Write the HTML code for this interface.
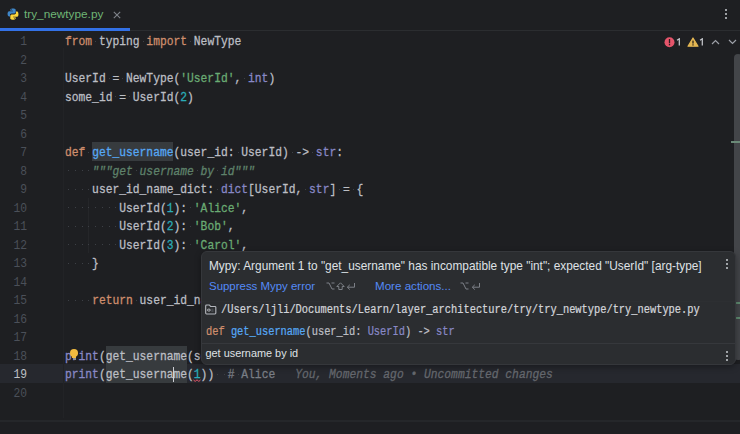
<!DOCTYPE html>
<html><head><meta charset="utf-8">
<style>
*{margin:0;padding:0;box-sizing:border-box}
html,body{width:740px;height:434px;overflow:hidden;background:#1e1f22}
body{position:relative;font-family:"Liberation Sans",sans-serif}
.a{position:absolute}
.ln{position:absolute;left:0;width:27px;text-align:right;font-family:"Liberation Mono",monospace;font-size:11.30px;color:#4b5059;line-height:18.50px;transform:scaleY(1.140);transform-origin:0 12.25px}
.cl{position:absolute;left:65.00px;white-space:pre;font-family:"Liberation Mono",monospace;font-size:11.30px;color:#bcbec4;line-height:18.50px;transform:scaleY(1.140);transform-origin:0 12.25px;-webkit-text-stroke:0.25px currentColor}
.k{color:#cf8e6d}.s{color:#6aab73}.n{color:#2aacb8}.f{color:#56a8f5}.b{color:#8888c6}
.d{color:#5f826b;font-style:italic}.c{color:#7a7e85}
.dot{position:absolute;width:1px;height:1px;background:#3d4046}
.hl{position:absolute;background:#373b3e}
.pm{position:absolute;white-space:pre;font-family:"Liberation Mono",monospace;font-size:10.37px;color:#bcbec4;transform:scaleY(1.2);transform-origin:0 78%;-webkit-text-stroke:0.2px currentColor}
.ps{position:absolute;white-space:pre;font-family:"Liberation Sans",sans-serif;color:#dfe1e5}
.vd{position:absolute;width:2px;height:2px;border-radius:1px;background:#c9ccd1}
</style></head><body>

<div class="a" style="left:0;top:30px;width:740px;height:1px;background:#2b2d30"></div>
<div class="a" style="left:0;top:28px;width:130px;height:3px;background:#3371e6"></div>
<svg class="a" style="left:7px;top:8px" width="12" height="12" viewBox="0 0 16 16">
<path d="M7.9 0.5c-3.6 0-3.4 1.6-3.4 1.6v1.7h3.5v0.5H3.1S0.7 4 0.7 7.7s2.1 3.5 2.1 3.5h1.2V9.5s-0.1-2.1 2.1-2.1h3.5s2 0 2-2V2.4S11.9 0.5 7.9 0.5zM6 1.6c0.35 0 0.63 0.28 0.63 0.63S6.35 2.86 6 2.86 5.37 2.58 5.37 2.23 5.65 1.6 6 1.6z" fill="#3f86c8"/>
<path d="M8.1 15.5c3.6 0 3.4-1.6 3.4-1.6v-1.7H8v-0.5h4.9s2.4 0.3 2.4-3.4-2.1-3.5-2.1-3.5H12v1.7s0.1 2.1-2.1 2.1H6.4s-2 0-2 2v3.3S4.1 15.5 8.1 15.5zM10 14.4c-0.35 0-0.63-0.28-0.63-0.63s0.28-0.63 0.63-0.63 0.63 0.28 0.63 0.63-0.28 0.63-0.63 0.63z" fill="#fcd63c"/>
</svg>
<div class="a" style="left:24px;top:7px;font-size:11.8px;line-height:14px;color:#6fb575;white-space:pre">try_newtype.py</div>
<svg class="a" style="left:113px;top:10.5px" width="8" height="8" viewBox="0 0 8 8"><path d="M0.8 0.8L7.2 7.2M7.2 0.8L0.8 7.2" stroke="#7f838a" stroke-width="1.1"/></svg>
<div class="vd" style="left:725px;top:9.0px"></div>
<div class="vd" style="left:725px;top:13.0px"></div>
<div class="vd" style="left:725px;top:17.0px"></div>
<div class="a" style="left:0;top:364.00px;width:740px;height:18.50px;background:#26282e"></div>
<div class="a" style="left:63px;top:48px;width:1px;height:370px;background:#222326"></div>
<div class="a" style="left:0;top:420px;width:740px;height:2px;background:#25272a"></div>
<div class="hl" style="left:92.1px;top:142.0px;width:81.4px;height:18.5px"></div>
<div class="hl" style="left:105.7px;top:345.5px;width:81.4px;height:37.0px"></div>
<div class="a" style="left:88.2px;top:197.5px;width:1px;height:55.5px;background:#252629"></div>
<div class="ln" style="top:33.20px;color:#4b5059">1</div>
<div class="ln" style="top:51.70px;color:#4b5059">2</div>
<div class="ln" style="top:70.20px;color:#4b5059">3</div>
<div class="ln" style="top:88.70px;color:#4b5059">4</div>
<div class="ln" style="top:107.20px;color:#4b5059">5</div>
<div class="ln" style="top:125.70px;color:#4b5059">6</div>
<div class="ln" style="top:144.20px;color:#4b5059">7</div>
<div class="ln" style="top:162.70px;color:#4b5059">8</div>
<div class="ln" style="top:181.20px;color:#4b5059">9</div>
<div class="ln" style="top:199.70px;color:#4b5059">10</div>
<div class="ln" style="top:218.20px;color:#4b5059">11</div>
<div class="ln" style="top:236.70px;color:#4b5059">12</div>
<div class="ln" style="top:255.20px;color:#4b5059">13</div>
<div class="ln" style="top:273.70px;color:#4b5059">14</div>
<div class="ln" style="top:292.20px;color:#4b5059">15</div>
<div class="ln" style="top:310.70px;color:#4b5059">16</div>
<div class="ln" style="top:329.20px;color:#4b5059">17</div>
<div class="ln" style="top:347.70px;color:#4b5059">18</div>
<div class="ln" style="top:366.20px;color:#bfc1c7">19</div>
<div class="ln" style="top:384.70px;color:#4b5059">20</div>
<div class="dot" style="left:95.0px;top:40.6px"></div>
<div class="dot" style="left:142.5px;top:40.6px"></div>
<div class="dot" style="left:190.0px;top:40.6px"></div>
<div class="dot" style="left:108.6px;top:77.6px"></div>
<div class="dot" style="left:122.2px;top:77.6px"></div>
<div class="dot" style="left:244.3px;top:77.6px"></div>
<div class="dot" style="left:115.4px;top:96.1px"></div>
<div class="dot" style="left:129.0px;top:96.1px"></div>
<div class="dot" style="left:88.2px;top:151.6px"></div>
<div class="dot" style="left:237.5px;top:151.6px"></div>
<div class="dot" style="left:291.8px;top:151.6px"></div>
<div class="dot" style="left:312.2px;top:151.6px"></div>
<div class="dot" style="left:67.9px;top:170.1px"></div>
<div class="dot" style="left:74.7px;top:170.1px"></div>
<div class="dot" style="left:81.5px;top:170.1px"></div>
<div class="dot" style="left:88.2px;top:170.1px"></div>
<div class="dot" style="left:135.7px;top:170.1px"></div>
<div class="dot" style="left:196.8px;top:170.1px"></div>
<div class="dot" style="left:217.2px;top:170.1px"></div>
<div class="dot" style="left:67.9px;top:188.6px"></div>
<div class="dot" style="left:74.7px;top:188.6px"></div>
<div class="dot" style="left:81.5px;top:188.6px"></div>
<div class="dot" style="left:88.2px;top:188.6px"></div>
<div class="dot" style="left:217.2px;top:188.6px"></div>
<div class="dot" style="left:305.4px;top:188.6px"></div>
<div class="dot" style="left:339.3px;top:188.6px"></div>
<div class="dot" style="left:352.9px;top:188.6px"></div>
<div class="dot" style="left:67.9px;top:207.1px"></div>
<div class="dot" style="left:74.7px;top:207.1px"></div>
<div class="dot" style="left:81.5px;top:207.1px"></div>
<div class="dot" style="left:88.2px;top:207.1px"></div>
<div class="dot" style="left:95.0px;top:207.1px"></div>
<div class="dot" style="left:101.8px;top:207.1px"></div>
<div class="dot" style="left:108.6px;top:207.1px"></div>
<div class="dot" style="left:115.4px;top:207.1px"></div>
<div class="dot" style="left:190.0px;top:207.1px"></div>
<div class="dot" style="left:67.9px;top:225.6px"></div>
<div class="dot" style="left:74.7px;top:225.6px"></div>
<div class="dot" style="left:81.5px;top:225.6px"></div>
<div class="dot" style="left:88.2px;top:225.6px"></div>
<div class="dot" style="left:95.0px;top:225.6px"></div>
<div class="dot" style="left:101.8px;top:225.6px"></div>
<div class="dot" style="left:108.6px;top:225.6px"></div>
<div class="dot" style="left:115.4px;top:225.6px"></div>
<div class="dot" style="left:190.0px;top:225.6px"></div>
<div class="dot" style="left:67.9px;top:244.1px"></div>
<div class="dot" style="left:74.7px;top:244.1px"></div>
<div class="dot" style="left:81.5px;top:244.1px"></div>
<div class="dot" style="left:88.2px;top:244.1px"></div>
<div class="dot" style="left:95.0px;top:244.1px"></div>
<div class="dot" style="left:101.8px;top:244.1px"></div>
<div class="dot" style="left:108.6px;top:244.1px"></div>
<div class="dot" style="left:115.4px;top:244.1px"></div>
<div class="dot" style="left:190.0px;top:244.1px"></div>
<div class="dot" style="left:67.9px;top:262.6px"></div>
<div class="dot" style="left:74.7px;top:262.6px"></div>
<div class="dot" style="left:81.5px;top:262.6px"></div>
<div class="dot" style="left:88.2px;top:262.6px"></div>
<div class="dot" style="left:67.9px;top:299.6px"></div>
<div class="dot" style="left:74.7px;top:299.6px"></div>
<div class="dot" style="left:81.5px;top:299.6px"></div>
<div class="dot" style="left:88.2px;top:299.6px"></div>
<div class="dot" style="left:135.7px;top:299.6px"></div>
<div class="dot" style="left:217.2px;top:373.6px"></div>
<div class="dot" style="left:223.9px;top:373.6px"></div>
<div class="dot" style="left:237.5px;top:373.6px"></div>
<div class="cl" style="top:33.20px"><span class="k">from</span> typing <span class="k">import</span> NewType</div>
<div class="cl" style="top:70.20px">UserId = NewType(<span class="s">'UserId'</span>, <span class="b">int</span>)</div>
<div class="cl" style="top:88.70px">some_id = UserId(<span class="n">2</span>)</div>
<div class="cl" style="top:144.20px"><span class="k">def</span> <span class="f">get_username</span>(user_id: UserId) -&gt; <span class="b">str</span>:</div>
<div class="cl" style="top:162.70px">    <span class="d">"""get username by id"""</span></div>
<div class="cl" style="top:181.20px">    user_id_name_dict: <span class="b">dict</span>[UserId, <span class="b">str</span>] = {</div>
<div class="cl" style="top:199.70px">        UserId(<span class="n">1</span>): <span class="s">'Alice'</span>,</div>
<div class="cl" style="top:218.20px">        UserId(<span class="n">2</span>): <span class="s">'Bob'</span>,</div>
<div class="cl" style="top:236.70px">        UserId(<span class="n">3</span>): <span class="s">'Carol'</span>,</div>
<div class="cl" style="top:255.20px">    }</div>
<div class="cl" style="top:292.20px">    <span class="k">return</span> user_id_name_dict[user_id]</div>
<div class="cl" style="top:347.70px"><span class="b">print</span>(get_username(some_id))</div>
<div class="cl" style="top:366.20px"><span class="b">print</span>(get_username(<span class="n">1</span>))  <span class="c"># Alice</span></div>
<div class="cl" style="left:295.2px;top:366.20px;color:#64676d;font-style:italic">You, Moments ago • Uncommitted changes</div>
<div class="a" style="left:173.2px;top:366.5px;width:1.2px;height:15px;background:#ced0d6"></div>
<svg class="a" style="left:193.4px;top:378.5px" width="8" height="3" viewBox="0 0 8 3"><path d="M0.5 1L2.2 2.4L4 0.8L5.8 2.4L7.5 1" stroke="#e8566a" stroke-width="1" fill="none"/></svg>
<div class="a" style="left:70px;top:349px;width:8px;height:8px;border-radius:50%;background:#f2bb3f"></div>
<div class="a" style="left:72px;top:355px;width:4px;height:3px;background:#f2bb3f"></div>
<div class="a" style="left:72.5px;top:358px;width:3px;height:2px;background:#8c8f94"></div>
<div class="a" style="left:734px;top:54px;width:8px;height:306px;border-radius:4px;background:#434549"></div>
<div class="a" style="left:731px;top:141px;width:9px;height:2px;background:#6b8a78"></div>
<div class="a" style="left:731px;top:302px;width:9px;height:2px;background:#5f8a70"></div>
<div class="a" style="left:731px;top:317px;width:9px;height:2px;background:#5f8a70"></div>
<svg class="a" style="left:664px;top:37px" width="11" height="11" viewBox="0 0 11 11"><circle cx="5.5" cy="5.2" r="5" fill="#e5556b"/><rect x="4.85" y="2.0" width="1.3" height="4.3" fill="#2a1d20"/><rect x="4.85" y="7.0" width="1.3" height="1.3" fill="#2a1d20"/></svg>
<svg class="a" style="left:676px;top:38px" width="6" height="9" viewBox="0 0 6 9"><path d="M1 2.2L3.3 0.8V7.6" stroke="#c4c6cc" stroke-width="1.25" fill="none"/></svg>
<svg class="a" style="left:686.5px;top:36.5px" width="12" height="10" viewBox="0 0 12 10"><path d="M6 1L11 9.2H1Z" fill="#e3b653" stroke="#e3b653" stroke-width="1.2" stroke-linejoin="round"/><rect x="5.35" y="3.6" width="1.3" height="3" fill="#2a2418"/><rect x="5.35" y="7.3" width="1.3" height="1.2" fill="#2a2418"/></svg>
<svg class="a" style="left:698.5px;top:38px" width="6" height="9" viewBox="0 0 6 9"><path d="M1 2.2L3.3 0.8V7.6" stroke="#c4c6cc" stroke-width="1.25" fill="none"/></svg>
<svg class="a" style="left:711px;top:39px" width="9" height="6" viewBox="0 0 9 6"><path d="M1 5L4.5 1.5L8 5" stroke="#9da0a8" stroke-width="1.2" fill="none"/></svg>
<svg class="a" style="left:728px;top:39px" width="9" height="6" viewBox="0 0 9 6"><path d="M1 1L4.5 4.5L8 1" stroke="#9da0a8" stroke-width="1.2" fill="none"/></svg>
<div class="a" style="left:201px;top:251px;width:535px;height:114px;background:#2b2d30;border:1px solid #35373b;border-radius:6px;box-shadow:0 2px 6px rgba(0,0,0,0.35)"></div>
<div class="a" style="left:202px;top:301px;width:533px;height:1px;background:#2d2f32"></div>
<div class="a" style="left:202px;top:343px;width:533px;height:1px;background:#36383c"></div>
<div class="ps" style="left:209px;top:259px;font-size:11.85px;line-height:14px">Mypy: Argument 1 to "get_username" has incompatible type "int"; expected "UserId" [arg-type]</div>
<div class="ps" style="left:209px;top:279px;font-size:11.45px;line-height:14px;color:#548af7">Suppress Mypy error</div>
<svg class="a" style="left:325.5px;top:282px" width="9" height="9" viewBox="0 0 9 9"><path d="M0.5 1H3L6 7H8.5M5.5 1H8.5" stroke="#7d8087" stroke-width="1" fill="none"/></svg><svg class="a" style="left:335.5px;top:282px" width="9" height="9" viewBox="0 0 9 9"><path d="M4.5 0.8L8.2 4.5H6.2V7.5H2.8V4.5H0.8Z" stroke="#7d8087" stroke-width="1" fill="none" stroke-linejoin="round"/></svg><svg class="a" style="left:346px;top:282px" width="10" height="9" viewBox="0 0 10 9"><path d="M8.5 1V5.2H1.5M3.8 2.8L1.3 5.2L3.8 7.6" stroke="#7d8087" stroke-width="1" fill="none"/></svg>
<div class="ps" style="left:375px;top:279px;font-size:11.6px;line-height:14px;color:#548af7">More actions...</div>
<svg class="a" style="left:460px;top:282px" width="9" height="9" viewBox="0 0 9 9"><path d="M0.5 1H3L6 7H8.5M5.5 1H8.5" stroke="#7d8087" stroke-width="1" fill="none"/></svg><svg class="a" style="left:470.5px;top:282px" width="10" height="9" viewBox="0 0 10 9"><path d="M8.5 1V5.2H1.5M3.8 2.8L1.3 5.2L3.8 7.6" stroke="#7d8087" stroke-width="1" fill="none"/></svg>
<div class="vd" style="left:725.5px;top:259.0px"></div>
<div class="vd" style="left:726px;top:351.0px"></div>
<div class="vd" style="left:725.5px;top:263.0px"></div>
<div class="vd" style="left:726px;top:355.0px"></div>
<div class="vd" style="left:725.5px;top:267.0px"></div>
<div class="vd" style="left:726px;top:359.0px"></div>
<svg class="a" style="left:205.3px;top:304px" width="11.6" height="11" viewBox="0 0 12 11"><path d="M1.6 10.1Q0.7 10.1 0.7 9.2V1.8Q0.7 0.9 1.6 0.9H4.6L6 2.4H10.3Q11.2 2.4 11.2 3.3V9.2Q11.2 10.1 10.3 10.1Z" stroke="#b4b7bd" stroke-width="1.15" fill="none" stroke-linejoin="round"/><ellipse cx="4" cy="6.1" rx="1.6" ry="1.05" stroke="#b4b7bd" stroke-width="1" fill="none"/><path d="M6.6 5.2H8.8M6.6 6.3H8.8M6.6 7.4H8.8" stroke="#5d6066" stroke-width="0.7"/></svg>
<div class="pm" style="color:#d2d4d9;left:221px;top:304px;line-height:13px">/Users/ljli/Documents/Learn/layer_architecture/try/try_newtype/try_newtype.py</div>
<div class="pm" style="left:206px;top:326px;line-height:13px"><span class="k">def</span> <span class="f">get_username</span>(user_id: <span class="b">UserId</span>) -&gt; <span class="b">str</span></div>
<div class="ps" style="left:205.5px;top:347px;font-size:10.9px;line-height:13px">get username by id</div>
</body></html>
